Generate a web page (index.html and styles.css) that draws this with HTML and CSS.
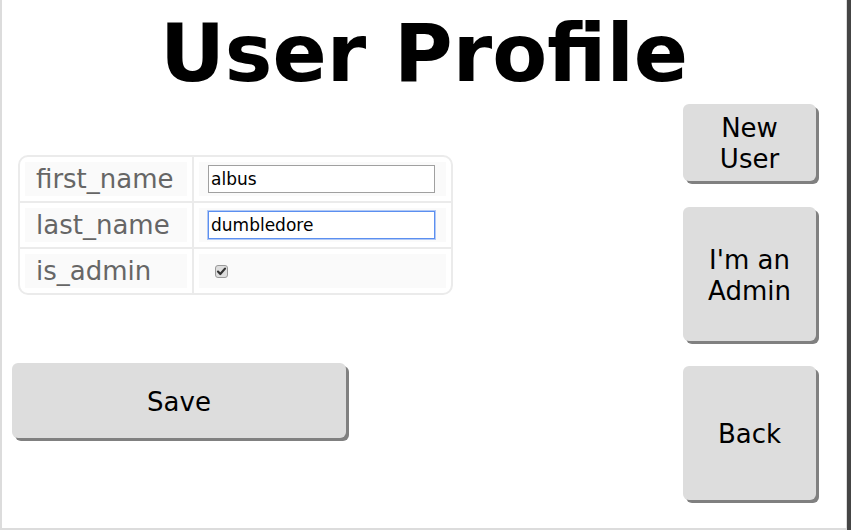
FILE: index.html
```html
<!DOCTYPE html>
<html>
<head>
<meta charset="utf-8">
<title>User Profile</title>
<link rel="stylesheet" href="styles.css">
</head>
<body>
<div class="frame">
  <h1 class="title">User Profile</h1>
  <div class="main">
    <div class="left">
      <table class="fields">
        <tr>
          <td class="key"><div class="cell">first_name</div></td>
          <td class="val"><div class="cell"><input class="text" type="text" value="albus"></div></td>
        </tr>
        <tr>
          <td class="key"><div class="cell">last_name</div></td>
          <td class="val"><div class="cell"><input class="text focused" type="text" value="dumbledore"></div></td>
        </tr>
        <tr class="last">
          <td class="key"><div class="cell">is_admin</div></td>
          <td class="val"><div class="cell"><span class="check"><svg width="11" height="11" viewBox="0 0 11 11"><path d="M2 5.6 L4.3 8 L9 2.6" fill="none" stroke="#333" stroke-width="2.2" stroke-linecap="round" stroke-linejoin="round"/></svg></span></div></td>
        </tr>
      </table>
      <button class="btn save">Save</button>
    </div>
    <div class="right">
      <button class="btn small">New<br>User</button>
      <button class="btn tall">I'm an<br>Admin</button>
      <button class="btn tall back">Back</button>
    </div>
  </div>
</div>
</body>
</html>
```
FILE: styles.css
```css
html, body {
  margin: 0;
  padding: 0;
}
body {
  background: #454545;
  width: 851px;
  height: 530px;
  overflow: hidden;
  font-family: "DejaVu Sans", sans-serif;
}
.frame {
  box-sizing: border-box;
  width: 847px;
  height: 530px;
  background: #fff;
  border-left: 2px solid #dcdcdc;
  border-right: 1px solid #dcdcdc;
  border-bottom: 2px solid #dcdcdc;
}
.title {
  margin: 0 0 10px 0;
  padding-top: 14px;
  font-size: 80px;
  line-height: 80px;
  font-weight: bold;
  text-align: center;
  color: #000;
}
.main {
  display: flex;
  justify-content: space-between;
  padding-right: 30px;
}
.left {
  display: flex;
  flex-direction: column;
  align-items: flex-start;
}
.fields {
  margin: 51px 0 0 16px;
  width: 435px;
  height: 140px;
  border: 2px solid #ebebeb;
  border-radius: 10px;
  border-spacing: 0;
  box-sizing: border-box;
}
.fields td {
  padding: 5px;
  border-bottom: 2px solid #ebebeb;
  vertical-align: middle;
}
.fields tr.last td {
  border-bottom: none;
}
.fields td.key {
  width: 162px;
  border-right: 2px solid #ebebeb;
}
.cell {
  background: #fafafa;
  height: 34px;
  display: flex;
  align-items: center;
}
.key .cell {
  padding-left: 11px;
  font-size: 26px;
  line-height: 34px;
  color: #666;
}
.val .cell {
  padding-left: 9px;
}
.text {
  box-sizing: border-box;
  width: 227px;
  height: 28px;
  margin: 0;
  padding: 0 2px;
  border: 1px solid #a0a0a0;
  font-family: "DejaVu Sans", sans-serif;
  font-size: 17px;
  color: #000;
  background: #fff;
  outline: none;
}
.text.focused {
  border: 1px solid #5b8ff0;
  box-shadow: 0 0 0 1px rgba(91, 143, 240, 0.45);
}
.check {
  box-sizing: border-box;
  margin-left: 7px;
  width: 13px;
  height: 13px;
  border: 1px solid #9a9a9a;
  border-radius: 3px;
  background: #dedede;
  display: flex;
  align-items: center;
  justify-content: center;
}
.check svg {
  display: block;
}
.btn {
  box-sizing: border-box;
  border: none;
  border-radius: 6px;
  background: #dddddd;
  box-shadow: 3px 3px 0 #808080;
  font-family: "DejaVu Sans", sans-serif;
  font-size: 26px;
  line-height: 31px;
  color: #000;
  padding: 3px 0 0 0;
  text-align: center;
}
.save {
  margin: 68px 0 0 10px;
  width: 334px;
  height: 75px;
}
.right {
  display: flex;
  flex-direction: column;
}
.small {
  width: 133px;
  height: 77px;
}
.tall {
  width: 133px;
  height: 134px;
  margin-top: 26px;
}
.back {
  margin-top: 25px;
}
```
